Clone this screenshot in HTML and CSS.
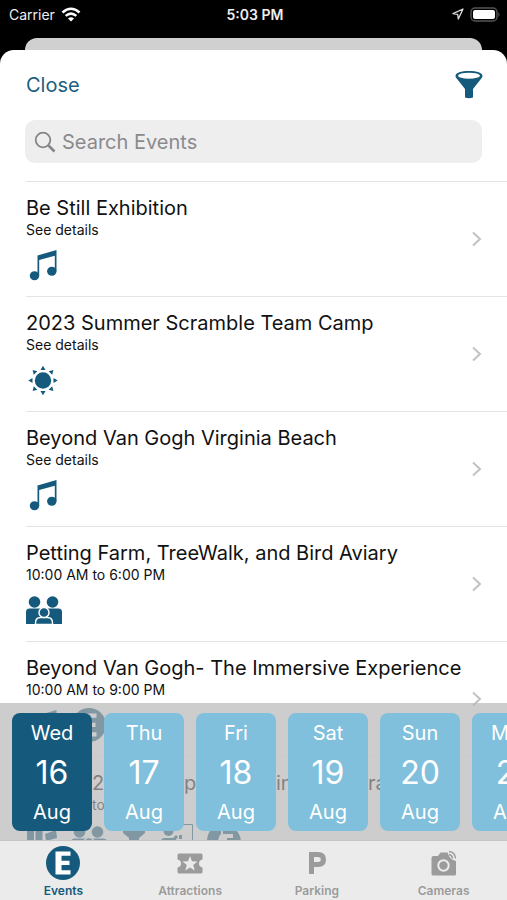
FILE: index.html
```html
<!DOCTYPE html>
<html lang="en">
<head>
<meta charset="utf-8">
<meta name="viewport" content="width=device-width, initial-scale=1">
<title>Events</title>
<link rel="stylesheet" href="styles.css">
</head>
<body>
<svg class="defs" aria-hidden="true">
  <symbol id="note" viewBox="0 0 36 36">
    <path d="M11.500 8.500 30.500 3v21h-1.700V8.700L13.200 13V29h-1.700z"/>
    <ellipse cx="8.500" cy="28.800" rx="4.700" ry="4.500"/><ellipse cx="25.800" cy="24.200" rx="4.700" ry="4.500"/>
  </symbol>
  <symbol id="sun" viewBox="0 0 36 36">
    <circle cx="17" cy="18.500" r="8.200"/>
    <path d="M14.500 8h5L17 3.800zM14.500 29h5L17 33.200zM6.500 16v5l-4.200-2.500zM27.500 16v5l4.200-2.500z"/>
    <path transform="rotate(45 17 18.500)" d="M14.500 8h5L17 3.800zM14.500 29h5L17 33.200zM6.500 16v5l-4.200-2.500zM27.500 16v5l4.200-2.500z"/>
  </symbol>
  <symbol id="family" viewBox="0 0 36 36">
    <circle cx="8.500" cy="10" r="5.800"/><circle cx="26.500" cy="10" r="5.800"/>
    <path d="M0 20q0-3.500 3.500-3.500h29q3.500 0 3.500 3.500v12H0z"/>
    <g stroke="#fff" stroke-width="1.400"><path d="M9.500 32.500v-1.500q0-5.500 5-5.500h7q5 0 5 5.500v1.500z"/><circle cx="18" cy="20.500" r="5"/></g>
  </symbol>
  <symbol id="event" viewBox="0 0 36 36">
    <circle cx="18" cy="18" r="17"/><path fill="#fff" d="M10.500 6.500h15v4.300h-9v5h8v4.200h-8v5.200h9v4.300h-15z"/>
  </symbol>
  <symbol id="books" viewBox="0 0 36 36"><path d="M1 5h7v29H1zM9.500 5h7v29h-7zM19 12l11-4 1 8-11 3zM20 20h12v14H20z"/></symbol>
  <symbol id="cup" viewBox="0 0 36 36"><path d="M7 8h22v3l-6 5v18H13V16l-6-5z"/></symbol>
  <symbol id="board" viewBox="0 0 36 36"><circle cx="7.500" cy="9" r="5"/><path d="M0 32V19q0-3 4-3h8l3-3 2 2-4 5v12zM18 13h3v4h-3z"/><path fill="none" stroke="currentColor" d="M15.500 9V2.500h16V34"/></symbol>
  <symbol id="headset" viewBox="0 0 36 36"><path d="M1 20C1 8 8 4 15 5v7q-3 2-3 8zM17 5q17-1 18 15H21v-4h6v-4H17z"/></symbol>
  <symbol id="chevron" viewBox="0 0 12 18"><path d="m2 2.500 7 6.500-7 6.500" fill="none" stroke="#c2c2c5" stroke-width="2"/></symbol>
</svg>

<div class="app">
  <div class="status">
    <div class="carrier">Carrier
      <svg width="20" height="15" viewBox="0 0 20 15" fill="none" stroke="#fff" stroke-width="2.600"><path d="M1.500 5.500q8.500-7.500 17 0M4.700 8.900q5.300-4.700 10.600 0"/><path d="M10 14.500 7 11.500q3-2.600 6 0z" fill="#fff" stroke="none"/></svg>
    </div>
    <div class="clock">5:03 PM</div>
    <div class="power">
      <svg width="12" height="12" viewBox="0 0 12 12" fill="none" stroke="#ddd" stroke-width="1.300" stroke-linejoin="round"><path d="M11 1 1 5.700l4.700.6.600 4.700z"/></svg>
      <svg width="31" height="15" viewBox="0 0 31 15"><rect x="1" y="1" width="26" height="13" rx="4" fill="none" stroke="#555" stroke-width="1.400"/><rect x="3" y="3" width="22" height="9" rx="2" fill="#fff"/><path d="M28.500 5q2 2.500 0 5z" fill="#666"/></svg>
    </div>
  </div>
  <div class="backcard"></div>
  <main class="sheet">
    <header class="head">
      <button class="close">Close</button>
      <button class="filter" aria-label="Filter">
        <svg width="28" height="30" viewBox="0 0 28 30"><path fill="#155a7c" d="M.500 6C.500 2.800 6 1 14 1s13.500 1.800 13.500 5c0 1-.7 2-2 3.500L18 19v8.500q-4 1.500-8 0V19L2.500 9.500C1.200 8 .500 7 .500 6z"/><ellipse cx="14" cy="5.700" rx="11" ry="3" fill="#fff"/></svg>
      </button>
    </header>
    <label class="search">
      <svg width="22" height="22" viewBox="0 0 22 22" fill="none" stroke="#85858a"><circle cx="9" cy="9" r="7.300" stroke-width="1.800"/><path d="m14.500 14.500 6 6" stroke-width="2.600"/></svg>
      <input type="search" placeholder="Search Events" aria-label="Search Events">
    </label>
    <ul class="list">
      <li class="row"><div><h2>Be Still Exhibition</h2><p>See details</p><div class="icons"><svg><use href="#note"/></svg></div></div><svg class="chev"><use href="#chevron"/></svg></li>
      <li class="row"><div><h2>2023 Summer Scramble Team Camp</h2><p>See details</p><div class="icons"><svg><use href="#sun"/></svg></div></div><svg class="chev"><use href="#chevron"/></svg></li>
      <li class="row"><div><h2>Beyond Van Gogh Virginia Beach</h2><p>See details</p><div class="icons"><svg><use href="#note"/></svg></div></div><svg class="chev"><use href="#chevron"/></svg></li>
      <li class="row"><div><h2>Petting Farm, TreeWalk, and Bird Aviary</h2><p>10:00 AM to 6:00 PM</p><div class="icons"><svg><use href="#family"/></svg></div></div><svg class="chev"><use href="#chevron"/></svg></li>
      <li class="row"><div><h2>Beyond Van Gogh- The Immersive Experience</h2><p>10:00 AM to 9:00 PM</p><div class="icons"><svg><use href="#note"/></svg><svg><use href="#event"/></svg></div></div><svg class="chev"><use href="#chevron"/></svg></li>
      <li class="row faint"><div><h2 class="parts"><span>2</span><span>pe</span><span>in</span><span>ra</span></h2><p class="until">to</p><div class="icons"><svg><use href="#books"/></svg><svg><use href="#family"/></svg><svg><use href="#cup"/></svg><svg><use href="#board"/></svg><svg><use href="#headset"/></svg></div></div></li>
    </ul>
    <div class="dates">
      <button class="day active"><span>Wed</span><b>16</b><span>Aug</span></button>
      <button class="day"><span>Thu</span><b>17</b><span>Aug</span></button>
      <button class="day"><span>Fri</span><b>18</b><span>Aug</span></button>
      <button class="day"><span>Sat</span><b>19</b><span>Aug</span></button>
      <button class="day"><span>Sun</span><b>20</b><span>Aug</span></button>
      <button class="day"><span>Mon</span><b>21</b><span>Aug</span></button>
    </div>
  </main>
  <nav class="tabs">
    <a href="#" class="tab on"><svg width="36" height="36"><use href="#event"/></svg>Events</a>
    <a href="#" class="tab"><svg width="36" height="36" viewBox="0 0 36 36"><path d="M7 8.500h22q1.500 0 1.500 1.500v4.500q-3.500.5-3.500 4t3.500 4V27q0 1.500-1.500 1.500H7q-1.500 0-1.500-1.500v-4.500q3.500-.5 3.500-4t-3.500-4V10q0-1.500 1.500-1.500z"/><path fill="#ebebeb" d="m18 11 2 5.200 5.500.3-4.300 3.500 1.500 5.500-4.700-3.100-4.700 3.100 1.500-5.500-4.300-3.500 5.500-.3z"/></svg>Attractions</a>
    <a href="#" class="tab"><svg width="36" height="36" viewBox="0 0 36 36"><path fill-rule="evenodd" d="M10 7h9q8 0 8 7.500T19 22h-4v7h-5zm5 5v5h4q2.800 0 2.800-2.500T19 12z"/></svg>Parking</a>
    <a href="#" class="tab"><svg width="36" height="36" viewBox="0 0 36 36"><path d="M7.500 11H12l2.500-3.500h7L23 11q2 4 7 5v13q0 1.500-1.500 1.500h-21Q5.500 30.500 5.500 29V13q0-2 2-2z"/><circle cx="17.500" cy="20.500" r="5.200" fill="none" stroke="#ebebeb" stroke-width="2"/><path fill="none" stroke="currentColor" stroke-width="1.500" d="M23 6.500q6 .5 6.500 7M23 9.500q3 .5 3.500 4"/></svg>Cameras</a>
  </nav>
</div>
</body>
</html>
```
FILE: styles.css
```css
* { box-sizing: border-box; }
body { margin: 0; background: #000; color: #111; font-family: Inter, "Liberation Sans", sans-serif; }
h2, p, ul { margin: 0; padding: 0; }
button { border: 0; padding: 0; background: none; font: inherit; }
.defs { position: absolute; width: 0; height: 0; }
.app { display: flex; flex-direction: column; height: 100vh; overflow: hidden; }
.status { display: grid; grid-template-columns: 1fr auto 1fr; align-items: center; height: 28px; flex: none; margin-bottom: 10px; padding: 0 6px 0 9px; color: #eee; font-size: 14px; }
.carrier, .power { display: flex; align-items: center; gap: 6px; }
.power { justify-content: flex-end; }
.clock { font-weight: 600; }
.backcard { flex: none; height: 12px; margin: 0 25px; border-radius: 12px 12px 0 0; background: #d0d0d0; }
.sheet { position: relative; display: flex; flex-direction: column; flex: 1; min-height: 0; overflow: hidden; border-radius: 14px 14px 0 0; background: #fff; }
.head { display: flex; align-items: center; justify-content: space-between; flex: none; height: 70px; padding: 0 24px 0 26px; }
.close { color: #1c6080; font-size: 20px; }
.filter svg { display: block; }
.search { display: flex; align-items: center; gap: 6px; flex: none; height: 43px; margin: 0 25px 18px; padding: 0 9px; border-radius: 10px; background: #eee; }
.search input { flex: 1; min-width: 0; border: 0; padding: 0; background: none; outline: 0; font: inherit; font-size: 20px; }
.search input::placeholder { color: #8a8a8e; opacity: 1; }
.list { flex: 1; min-height: 0; overflow: hidden; padding-left: 26px; list-style: none; }
.row { display: flex; align-items: center; justify-content: space-between; height: 115px; padding-right: 24px; border-top: 1px solid #e4e4e6; }
.faint { border-color: #f4f4f5; }
h2 { font-size: 20px; font-weight: 400; line-height: 26px; white-space: nowrap; }
p { font-size: 14px; line-height: 17px; }
.parts { display: grid; grid-template-columns: repeat(4, 92px); padding-left: 66px; }
.until { padding-left: 66px; }
.icons { display: flex; gap: 9px; margin-top: 9px; color: #155a7c; fill: currentColor; }
.icons svg { width: 36px; height: 36px; }
.chev { flex: none; width: 12px; height: 18px; }
.dates { position: absolute; right: 0; bottom: 0; left: 0; display: flex; gap: 12px; overflow: hidden; padding: 10px 12px 9px; background: rgba(181, 181, 181, .68); }
.day { display: flex; flex: none; flex-direction: column; align-items: center; justify-content: space-between; width: 80px; height: 118px; padding: 8px 0 7px; border-radius: 8px; background: #80c0dc; color: #fff; font-size: 20px; line-height: 24px; }
.day b { font-size: 32px; font-weight: 400; line-height: 36px; }
.active { background: #155a7c; }
.tabs { display: grid; grid-template-columns: repeat(4, 1fr); flex: none; height: 60px; border-top: 1px solid #c5c5c5; background: #ebebeb; }
.tab { display: flex; flex-direction: column; align-items: center; gap: 2px; padding-top: 4px; color: #9b9b9b; fill: currentColor; font-size: 12px; font-weight: 600; line-height: 16px; text-decoration: none; }
.on { color: #155a7c; }
```
